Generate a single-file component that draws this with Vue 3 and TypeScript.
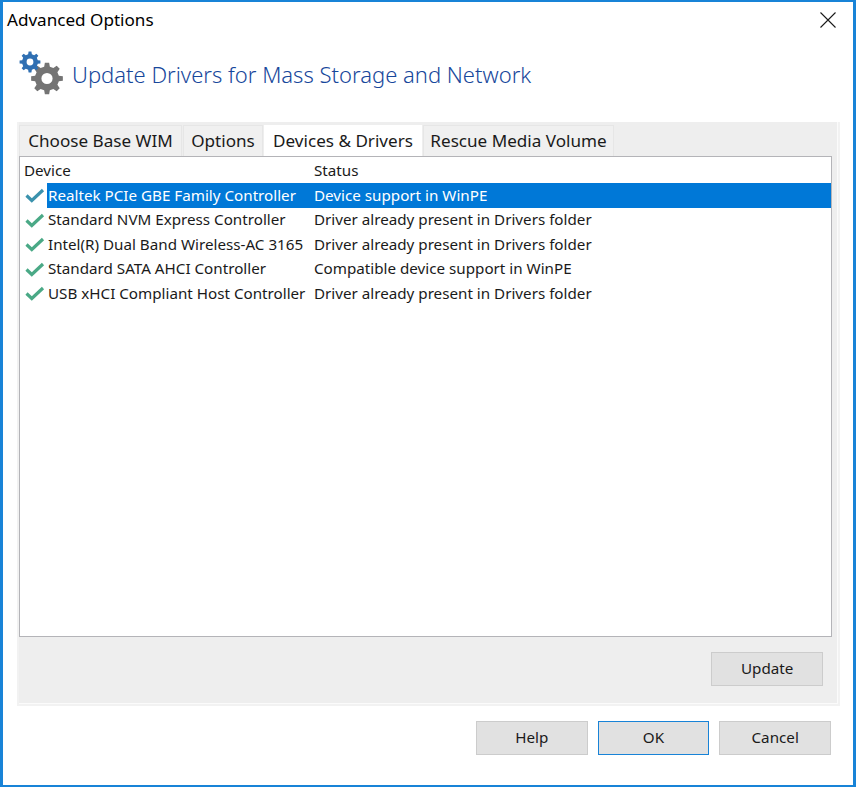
<template>
  <div class="dialog">
    <div class="title-bar">
      <span class="title">Advanced Options</span>
      <svg class="close" width="16" height="16" viewBox="0 0 16 16">
        <path d="M0.5 0.5 L15.5 15.5 M15.5 0.5 L0.5 15.5" stroke="#1a1a1a" stroke-width="1.1" fill="none" />
      </svg>
    </div>

    <div class="heading">
      <svg class="gears" width="48" height="48" viewBox="0 0 48 48">
        <path :d="gearPath(28, 27.5, 16, 12.2, 5.6)" fill="#747474" fill-rule="evenodd" />
        <path :d="gearPath(11, 11, 10.5, 8, 3.4)" fill="#2f6fb2" fill-rule="evenodd" />
      </svg>
      <h1>Update Drivers for Mass Storage and Network</h1>
    </div>

    <div class="tab-panel">
      <div class="tabs">
        <div
          v-for="tab in tabs"
          :key="tab.name"
          class="tab"
          :class="{ active: tab.name === activeTab }"
        >
          {{ tab.name }}
        </div>
      </div>

      <div class="list">
        <div class="list-head">
          <span class="col-device">Device</span>
          <span class="col-status">Status</span>
        </div>
        <div
          v-for="(row, i) in rows"
          :key="row.device"
          class="row"
        >
          <svg class="check" width="20" height="16" viewBox="0 0 20 16">
            <path
              d="M1.5 8.5 L6.8 13.5 L18 3"
              fill="none"
              :stroke="i === 0 ? '#3b92ad' : '#4aa986'"
              stroke-width="3.2"
            />
          </svg>
          <div class="cells" :class="{ selected: i === 0 }">
            <span class="cell-device">{{ row.device }}</span>
            <span class="cell-status">{{ row.status }}</span>
          </div>
        </div>
      </div>

      <div class="panel-actions">
        <button class="btn">Update</button>
      </div>
    </div>

    <div class="footer">
      <button class="btn">Help</button>
      <button class="btn default">OK</button>
      <button class="btn">Cancel</button>
    </div>
  </div>
</template>

<script setup lang="ts">
const activeTab = 'Devices & Drivers';

const tabs = [
  { name: 'Choose Base WIM' },
  { name: 'Options' },
  { name: 'Devices & Drivers' },
  { name: 'Rescue Media Volume' },
];

const rows = [
  { device: 'Realtek PCIe GBE Family Controller', status: 'Device support in WinPE' },
  { device: 'Standard NVM Express Controller', status: 'Driver already present in Drivers folder' },
  { device: 'Intel(R) Dual Band Wireless-AC 3165', status: 'Driver already present in Drivers folder' },
  { device: 'Standard SATA AHCI Controller', status: 'Compatible device support in WinPE' },
  { device: 'USB xHCI Compliant Host Controller', status: 'Driver already present in Drivers folder' },
];

// eight-toothed cog with a round hole in the middle
const gearPath = (cx: number, cy: number, outer: number, inner: number, hole: number) => {
  const teeth = 8;
  const step = (Math.PI * 2) / teeth;
  const pts: string[] = [];
  for (let i = 0; i < teeth; i++) {
    const a = i * step;
    const at = (r: number, d: number) =>
      `${(cx + r * Math.cos(a + d)).toFixed(2)} ${(cy + r * Math.sin(a + d)).toFixed(2)}`;
    pts.push(at(inner, -step * 0.3), at(outer, -step * 0.17), at(outer, step * 0.17), at(inner, step * 0.3));
  }
  const ring = `M${cx - hole} ${cy} a${hole} ${hole} 0 1 0 ${hole * 2} 0 a${hole} ${hole} 0 1 0 ${-hole * 2} 0Z`;
  return `M${pts.join(' L')}Z ${ring}`;
};
</script>

<style>
html,
body {
  margin: 0;
  background: #fff;
}
</style>

<style scoped>
.dialog {
  box-sizing: border-box;
  width: 856px;
  height: 787px;
  display: flex;
  flex-direction: column;
  border: solid #1883d7;
  border-width: 2px 3px;
  background: #fff;
  color: #1a1a1a;
  font-family: "Noto Sans", "Open Sans", sans-serif;
  font-size: 15.2px;
  overflow: hidden;
}

.title-bar {
  height: 35px;
  display: flex;
  align-items: center;
  justify-content: space-between;
  padding: 0 17px 0 4px;
  flex: none;
}

.title {
  font-size: 17.1px;
  color: #000;
}

.heading {
  flex: none;
  height: 50px;
  margin-top: 13px;
  display: flex;
  align-items: center;
  padding-left: 16px;
  gap: 5px;
}

.gears {
  flex: none;
}

h1 {
  margin: 0 0 2px;
  font-size: 22px;
  font-weight: 300;
  color: #17479b;
}

.tab-panel {
  flex: none;
  margin: 22px 13px 0 14px;
  height: 584px;
  box-sizing: border-box;
  background: #eeeeee;
  padding: 3px 6px 0 0;
  display: flex;
  flex-direction: column;
  border: 2px solid #f2f2f2;
  border-top: none;
  box-shadow: inset -1px -1px 0 #fbfbfb;
}

.tabs {
  display: flex;
  height: 28px;
  flex: none;
  gap: 1px;
}

.tab {
  display: flex;
  align-items: center;
  justify-content: center;
  height: 31px;
  box-sizing: border-box;
  background: #f0f0f0;
  border: 1px solid #e6e6e6;
  border-bottom: none;
  font-size: 17.1px;
  padding-bottom: 2px;
}

.tab:nth-child(1) { width: 163px; }
.tab:nth-child(2) { width: 80px; }
.tab:nth-child(3) { width: 158px; }
.tab:nth-child(4) { width: 191px; }

.tab.active {
  background: #fff;
  border-color: #fff;
}

.list {
  flex: none;
  position: relative;
  height: 481px;
  box-sizing: border-box;
  background: #fff;
  border: 1px solid #b4b4b8;
  padding-top: 2px;
  margin-top: 3px;
}

.list-head {
  display: grid;
  grid-template-columns: 290px 1fr;
  height: 24.3px;
  box-sizing: border-box;
  align-items: center;
  padding: 0 0 2px 4px;
}

.row {
  display: flex;
  align-items: center;
  height: 24.5px;
  padding-left: 5px;
}

.check {
  flex: none;
  margin-right: 2px;
  position: relative;
  top: -0.5px;
}

.cells {
  flex: 1;
  height: 100%;
  box-sizing: border-box;
  display: grid;
  grid-template-columns: 266px 1fr;
  align-items: center;
  padding: 0 0 1.5px 1px;
  white-space: nowrap;
}

.cells.selected {
  background: #0078d7;
  color: #fff;
}

.panel-actions {
  flex: 1;
  display: flex;
  justify-content: flex-end;
  padding: 15px 9px 0 0;
}

.btn {
  width: 111.7px;
  height: 34px;
  box-sizing: border-box;
  background: #e1e1e1;
  border: 1px solid #cccccc;
  color: #1a1a1a;
  font: inherit;
  padding: 0 0 2px;
}

.btn.default {
  border: 1.5px solid #1883d7;
}

.footer {
  flex: none;
  display: flex;
  justify-content: flex-end;
  gap: 10px;
  padding: 15px 22px 0 0;
}
</style>
